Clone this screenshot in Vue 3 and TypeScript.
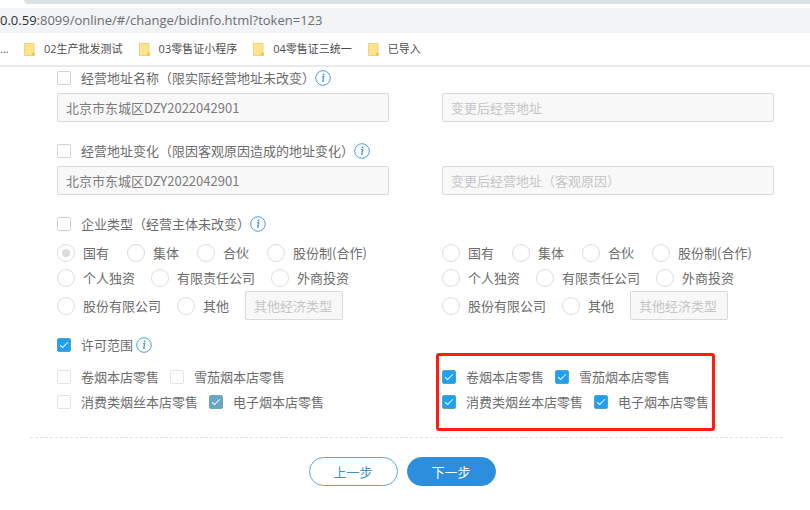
<script setup lang="ts">
import { reactive, ref } from 'vue'

interface AddressField {
  id: string
  title: string
  checked: boolean
  current: string
  placeholder: string
  next: string
}

interface ScopeOption {
  name: string
  checked: boolean
}

interface Side {
  key: string
  type: string
  other: string
}

const bookmarks: string[] = ['02生产批发测试', '03零售证小程序', '04零售证三统一', '已导入']

const addresses = reactive<AddressField[]>([
  {
    id: 'name',
    title: '经营地址名称（限实际经营地址未改变）',
    checked: false,
    current: '北京市东城区DZY2022042901',
    placeholder: '变更后经营地址',
    next: '',
  },
  {
    id: 'move',
    title: '经营地址变化（限因客观原因造成的地址变化）',
    checked: false,
    current: '北京市东城区DZY2022042901',
    placeholder: '变更后经营地址（客观原因）',
    next: '',
  },
])

const typeRows: string[][] = [
  ['国有', '集体', '合伙', '股份制(合作)'],
  ['个人独资', '有限责任公司', '外商投资'],
  ['股份有限公司', '其他'],
]

const sides = reactive<Side[]>([
  { key: 'before', type: '国有', other: '' },
  { key: 'after', type: '', other: '' },
])

const changeType = ref(false)
const changeScope = ref(true)

const scopeBefore: ScopeOption[][] = [
  [
    { name: '卷烟本店零售', checked: false },
    { name: '雪茄烟本店零售', checked: false },
  ],
  [
    { name: '消费类烟丝本店零售', checked: false },
    { name: '电子烟本店零售', checked: true },
  ],
]

const scopeAfter = reactive<ScopeOption[][]>(
  scopeBefore.map((row) => row.map((o) => ({ name: o.name, checked: true }))),
)
</script>

<template>
  <div class="page">
    <header class="browser">
      <div class="tabs"></div>
      <div class="address"><span class="host">0.0.59</span>:8099/online/#/change/bidinfo.html?token=123</div>
      <nav class="bookmarks">
        <span class="more">...</span>
        <a v-for="b in bookmarks" :key="b" class="bookmark" href="#">
          <svg width="11" height="13" viewBox="0 0 11 13" aria-hidden="true">
            <path d="M.5.5h9.5v9l.7.8v2.2H.5z" fill="#ffe48c" stroke="#f0d27a" />
            <path d="M8 12.500V10.500L9.500 9l1.200 1.300v2.200z" fill="#efc64f" />
          </svg>
          {{ b }}
        </a>
      </nav>
    </header>

    <main class="content">
      <form class="form" @submit.prevent>
        <section v-for="a in addresses" :key="a.id" class="section">
          <div class="heading">
            <label class="option check">
              <input v-model="a.checked" type="checkbox" />{{ a.title }}
            </label>
            <svg class="info" viewBox="0 0 16 16" aria-hidden="true">
              <circle cx="8" cy="8" r="7.300" />
              <path d="M7 6.700h1.700L7.700 11.200h1.200" />
              <circle class="dot" cx="8.600" cy="4.500" r="1" />
            </svg>
          </div>
          <div class="columns">
            <input v-model="a.current" class="field" type="text" disabled :aria-label="a.title" />
            <input
              v-model="a.next"
              class="field"
              type="text"
              disabled
              :placeholder="a.placeholder"
              :aria-label="a.placeholder"
            />
          </div>
        </section>

        <section class="section types">
          <div class="heading">
            <label class="option check">
              <input v-model="changeType" type="checkbox" />企业类型（经营主体未改变）
            </label>
            <svg class="info" viewBox="0 0 16 16" aria-hidden="true">
              <circle cx="8" cy="8" r="7.300" />
              <path d="M7 6.700h1.700L7.700 11.200h1.200" />
              <circle class="dot" cx="8.600" cy="4.500" r="1" />
            </svg>
          </div>
          <div class="columns">
            <div v-for="s in sides" :key="s.key" class="radios">
              <div v-for="(row, i) in typeRows" :key="i" class="radio-row">
                <label v-for="t in row" :key="t" class="option radio">
                  <input v-model="s.type" type="radio" :name="s.key" :value="t" disabled />{{ t }}
                </label>
                <input
                  v-if="i === typeRows.length - 1"
                  v-model="s.other"
                  class="field other"
                  type="text"
                  disabled
                  placeholder="其他经济类型"
                  aria-label="其他经济类型"
                />
              </div>
            </div>
          </div>
        </section>

        <section class="section scope">
          <div class="heading">
            <label class="option check">
              <input v-model="changeScope" type="checkbox" />许可范围
            </label>
            <svg class="info" viewBox="0 0 16 16" aria-hidden="true">
              <circle cx="8" cy="8" r="7.300" />
              <path d="M7 6.700h1.700L7.700 11.200h1.200" />
              <circle class="dot" cx="8.600" cy="4.500" r="1" />
            </svg>
          </div>
          <div class="columns">
            <div class="checks">
              <div v-for="(row, i) in scopeBefore" :key="i" class="check-row">
                <label v-for="o in row" :key="o.name" class="option check">
                  <input type="checkbox" :checked="o.checked" disabled />{{ o.name }}
                </label>
              </div>
            </div>
            <div class="checks marked">
              <div v-for="(row, i) in scopeAfter" :key="i" class="check-row">
                <label v-for="o in row" :key="o.name" class="option check">
                  <input v-model="o.checked" type="checkbox" />{{ o.name }}
                </label>
              </div>
            </div>
          </div>
        </section>
      </form>

      <div class="actions">
        <button class="btn" type="button">上一步</button>
        <button class="btn primary" type="button">下一步</button>
      </div>
    </main>
  </div>
</template>

<style>
body {
  margin: 0;
  background: #fff;
}
</style>

<style scoped>
.page {
  overflow: hidden;
  color: #6c6c6c;
  font-family: 'Noto Sans CJK SC', sans-serif;
  font-size: 13px;
  line-height: 22px;
}

.tabs {
  height: 4px;
  margin-left: 24px;
  background: #dee1e4;
  border-bottom-left-radius: 4px;
}

.address {
  margin-top: 4px;
  height: 25px;
  background: #f1f3f4;
  font-family: 'Open Sans', sans-serif;
  font-size: 13px;
  line-height: 25px;
  white-space: nowrap;
  color: #6b6e72;
}

.host {
  color: #303236;
}

.bookmarks {
  display: flex;
  align-items: center;
  gap: 16px;
  height: 32px;
  border-bottom: 2px solid #e9eaeb;
  font-family: 'Open Sans', 'Noto Sans CJK SC', sans-serif;
  font-size: 11px;
  color: #4c4c4c;
}

.more {
  width: 8px;
}

.bookmark {
  display: flex;
  align-items: center;
  gap: 9px;
  color: inherit;
  text-decoration: none;
  white-space: nowrap;
}

.content {
  padding: 0 27px 0 30px;
}

.form {
  display: flex;
  flex-direction: column;
  gap: 18px;
  padding: 0 9px 24px 27px;
  border-bottom: 1px dashed #e2e2e2;
}

.section {
  display: flex;
  flex-direction: column;
  gap: 4px;
}

.types {
  gap: 6px;
}

.scope {
  margin-top: -4px;
  gap: 10px;
}

.heading {
  display: flex;
  align-items: center;
}

.scope .heading {
  gap: 3px;
}

.columns {
  display: grid;
  grid-template-columns: 1fr 1fr;
  gap: 53px;
}

.option {
  display: inline-flex;
  align-items: center;
  white-space: nowrap;
}

.check {
  gap: 10px;
}

.radio {
  gap: 8px;
}

.check input,
.radio input {
  display: grid;
  place-items: center;
  flex: none;
  box-sizing: border-box;
  margin: 0;
  appearance: none;
  background: #fff;
}

.check input {
  width: 14px;
  height: 14px;
  border: 1px solid #d2d2d2;
  border-radius: 2px;
}

.check input:disabled {
  border-color: #e4e4e4;
}

.check input:checked {
  border-color: #55aa9c;
  background: #1e9fff;
}

.check input:checked:disabled {
  border-color: #6fae98;
  background: #6aa3cb;
}

.check input:checked::after {
  content: '';
  width: 7px;
  height: 3px;
  margin-bottom: 3px;
  border: solid #fff;
  border-width: 0 0 1px 1px;
  transform: rotate(-45deg);
}

.radio input {
  width: 18px;
  height: 18px;
  border: 1px solid #dcdcdc;
  border-radius: 50%;
}

.radio input:checked::after {
  content: '';
  width: 8px;
  height: 8px;
  border-radius: 50%;
  background: #dcdcdc;
}

.info {
  width: 16px;
  height: 16px;
  fill: none;
  stroke: #4a9be8;
  stroke-width: 1;
}

.info path {
  stroke-width: 1.3;
}

.info .dot {
  fill: #4a9be8;
  stroke: none;
}

.field {
  box-sizing: border-box;
  width: 100%;
  height: 29px;
  padding: 0 8px;
  border: 1px solid #dadada;
  border-radius: 2px;
  background: #f8f8f8;
  color: #7c7c7c;
  font: inherit;
}

.field::placeholder {
  color: #c6c6c6;
  opacity: 1;
}

.other {
  width: 98px;
}

.radios {
  display: flex;
  flex-direction: column;
  gap: 1px;
}

.radio-row {
  display: flex;
  align-items: center;
  gap: 16px;
  min-height: 24px;
}

.radio-row:first-child {
  gap: 18px;
}

.checks {
  display: flex;
  flex-direction: column;
  gap: 3px;
}

.check-row {
  display: flex;
  gap: 11px;
}

.marked {
  position: relative;
}

.marked::after {
  content: '';
  position: absolute;
  top: -13px;
  left: -6px;
  box-sizing: border-box;
  width: 279px;
  height: 78px;
  border: 3px solid #ff1d12;
  border-radius: 3px;
  pointer-events: none;
}

.actions {
  display: flex;
  justify-content: center;
  gap: 9px;
  padding: 19px 9px 24px 0;
}

.btn {
  width: 89px;
  height: 29px;
  padding: 0;
  border: 1px solid #5ba6dc;
  border-radius: 15px;
  background: #fff;
  color: #3f8fcb;
  font: inherit;
}

.primary {
  border-color: #2d8fdc;
  background: #2d8fdc;
  color: #fff;
}
</style>
